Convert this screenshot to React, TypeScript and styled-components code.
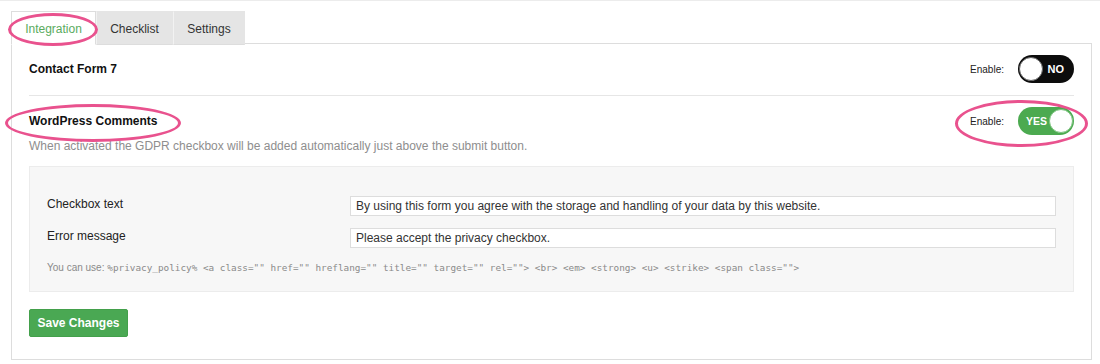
import React from "react";
import styled, { createGlobalStyle } from "styled-components";

const Global = createGlobalStyle`
  html, body { margin: 0; padding: 0; background: #fff; }
  body { font-family: "Liberation Sans", Arial, sans-serif; color: #222; }
  * { box-sizing: border-box; }
`;

const Page = styled.div`
  position: relative;
  width: 1100px;
  height: 364px;
  border-top: 1px solid #ececec;
  padding: 10px 8px 0 11px;
`;

const TabBar = styled.div`
  display: flex;
  height: 33px;
  position: relative;
  z-index: 1;
`;

const Tab = styled.div<{ $active?: boolean }>`
  display: flex;
  align-items: center;
  justify-content: center;
  width: ${(p) => (p.$active ? "85px" : "77px")};
  height: 34px;
  font-size: 12px;
  color: ${(p) => (p.$active ? "#5aab5e" : "#333")};
  background: ${(p) => (p.$active ? "#fff" : "#e5e5e5")};
  border: 1px solid ${(p) => (p.$active ? "#ddd" : "#e5e5e5")};
  border-bottom: ${(p) => (p.$active ? "1px solid #fff" : "1px solid #ddd")};
  border-left-color: ${(p) => (p.$active ? "#ddd" : "#f2f2f2")};
  padding-top: 2px;
  &:last-child { width: 72px; }
`;

const Panel = styled.div`
  width: 1081px;
  margin-top: -1px;
  border: 1px solid #ddd;
  padding: 11px 17px 22px 17px;
`;

const Section = styled.div<{ $divider?: boolean }>`
  padding-bottom: ${(p) => (p.$divider ? "12px" : "0")};
  margin-bottom: ${(p) => (p.$divider ? "11px" : "0")};
  border-bottom: ${(p) => (p.$divider ? "1px solid #e6e6e6" : "none")};
`;

const Row = styled.div`
  display: flex;
  align-items: center;
  justify-content: space-between;
  height: 28px;
`;

const Heading = styled.div`
  font-size: 12px;
  font-weight: bold;
  color: #111;
`;

const EnableWrap = styled.div`
  display: flex;
  align-items: center;
  gap: 14px;
  font-size: 10px;
  color: #222;
`;

const Toggle = styled.div<{ $on?: boolean }>`
  position: relative;
  width: 56px;
  height: 28px;
  border-radius: 14px;
  background: ${(p) => (p.$on ? "#4caa50" : "#0c0c0c")};
  display: flex;
  align-items: center;
  justify-content: ${(p) => (p.$on ? "flex-start" : "flex-end")};
  padding-left: ${(p) => (p.$on ? "8px" : "0")};
  padding-right: ${(p) => (p.$on ? "0" : "10px")};
  color: #fff;
  font-size: ${(p) => (p.$on ? "10.5px" : "11px")};
  font-weight: bold;
`;

const Knob = styled.span<{ $on?: boolean }>`
  position: absolute;
  top: 2px;
  ${(p) => (p.$on ? "right: 1px;" : "left: 1px;")}
  width: 24px;
  height: 24px;
  border-radius: 50%;
  background: #fff;
  border: 1px solid ${(p) => (p.$on ? "#7cc47f" : "#666")};
`;

const Description = styled.div`
  font-size: 12px;
  color: #8e8e8e;
  margin-top: 4px;
  line-height: 15px;
`;

const SettingsBox = styled.div`
  margin-top: 12px;
  background: #f7f7f7;
  border: 1px solid #ececec;
  padding: 29px 17px 17px 17px;
`;

const FieldGrid = styled.div`
  display: grid;
  grid-template-columns: 303px 1fr;
  row-gap: 12px;
  align-items: center;
`;

const Label = styled.label`
  font-size: 12px;
  color: #222;
  margin-top: -4px;
`;

const Input = styled.input`
  height: 20px;
  width: 100%;
  border: 1px solid #ddd;
  background: #fff;
  font-family: "Liberation Sans", Arial, sans-serif;
  font-size: 12px;
  color: #333;
  padding: 0 5px;
  outline: none;
`;

const Hint = styled.div`
  margin-top: 14px;
  font-size: 10px;
  color: #8a8a8a;
  line-height: 12px;
`;

const Code = styled.span`
  font-family: "DejaVu Sans Mono", "Liberation Mono", monospace;
  font-size: 9.35px;
`;

const SaveButton = styled.button`
  margin-top: 17px;
  width: 99px;
  height: 28px;
  background: #4aa853;
  border: 1px solid #43a04b;
  border-radius: 2px;
  color: #fff;
  font-family: "Liberation Sans", Arial, sans-serif;
  font-size: 12px;
  font-weight: bold;
  padding: 0;
`;

const Highlight = styled.div`
  position: absolute;
  border: 3px solid #e9528e;
  border-radius: 50%;
  pointer-events: none;
  z-index: 5;
`;

export default function App() {
  return (
    <>
      <Global />
      <Page>
        <TabBar>
          <Tab $active>Integration</Tab>
          <Tab>Checklist</Tab>
          <Tab>Settings</Tab>
        </TabBar>
        <Panel>
          <Section $divider>
            <Row>
              <Heading>Contact Form 7</Heading>
              <EnableWrap>
                Enable:
                <Toggle>
                  <Knob />
                  NO
                </Toggle>
              </EnableWrap>
            </Row>
          </Section>
          <Section>
            <Row>
              <Heading>WordPress Comments</Heading>
              <EnableWrap>
                Enable:
                <Toggle $on>
                  YES
                  <Knob $on />
                </Toggle>
              </EnableWrap>
            </Row>
            <Description>
              When activated the GDPR checkbox will be added automatically just above the submit button.
            </Description>
            <SettingsBox>
              <FieldGrid>
                <Label>Checkbox text</Label>
                <Input
                  readOnly
                  value="By using this form you agree with the storage and handling of your data by this website."
                />
                <Label>Error message</Label>
                <Input readOnly value="Please accept the privacy checkbox." />
              </FieldGrid>
              <Hint>
                You can use:{" "}
                <Code>
                  {`%privacy_policy% <a class="" href="" hreflang="" title="" target="" rel=""> <br> <em> <strong> <u> <strike> <span class="">`}
                </Code>
              </Hint>
            </SettingsBox>
          </Section>
          <SaveButton>Save Changes</SaveButton>
        </Panel>
        <Highlight style={{ left: 8, top: 12, width: 90, height: 33 }} />
        <Highlight style={{ left: 5, top: 103, width: 176, height: 38 }} />
        <Highlight style={{ left: 955, top: 99, width: 133, height: 47 }} />
      </Page>
    </>
  );
}
